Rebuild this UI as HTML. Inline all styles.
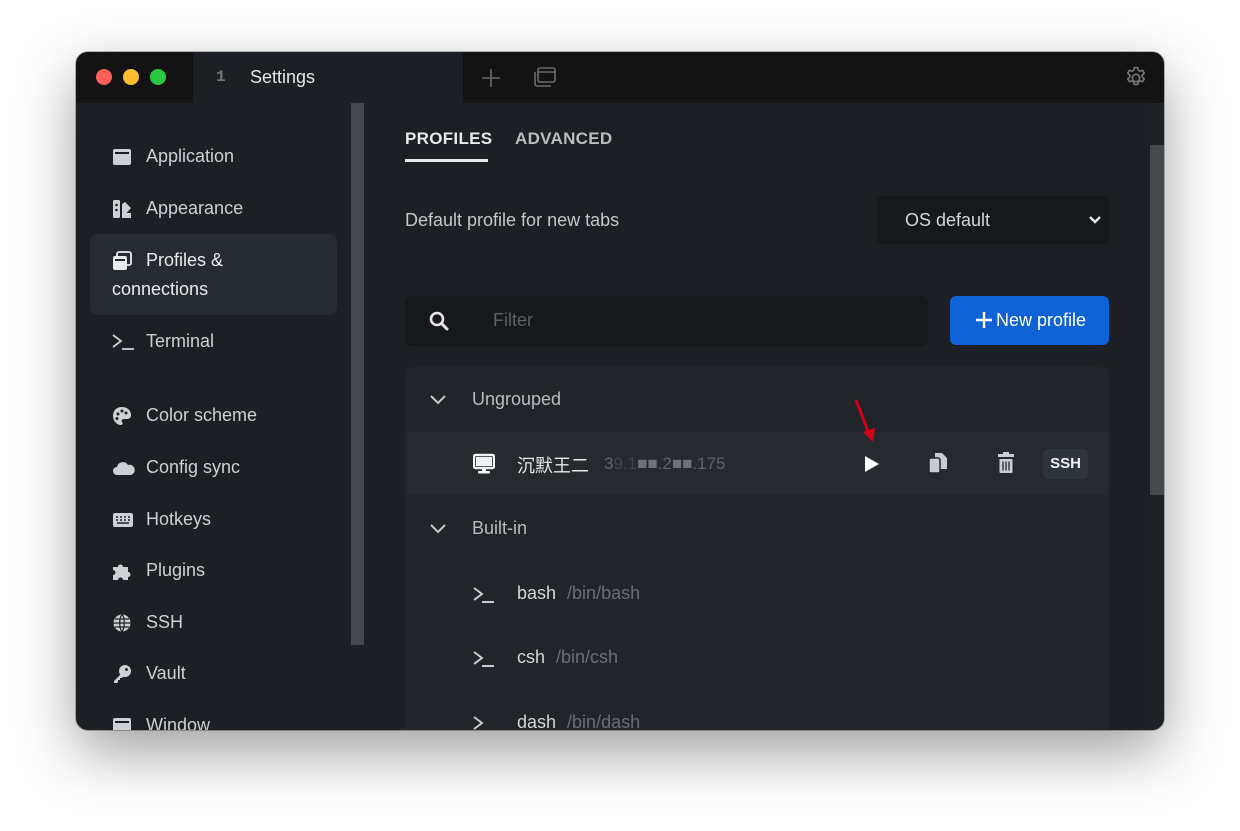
<!DOCTYPE html>
<html><head><meta charset="utf-8">
<style>
*{margin:0;padding:0;box-sizing:border-box}
body{width:1240px;height:831px;background:#fff;font-family:"Source Sans Pro","Liberation Sans","Noto Sans CJK SC",sans-serif;position:relative;overflow:hidden}
.win{position:absolute;left:76px;top:52px;width:1088px;height:678px;border-radius:12px;background:#1c1f23;overflow:hidden;box-shadow:0 22px 60px rgba(0,0,0,.38),0 0 0 1px rgba(0,0,0,.25)}
.abs{position:absolute}
.tb{left:0;top:0;width:1088px;height:51px;background:#131313}
.tab{left:117px;top:0;width:270px;height:51px;background:#1c1f23}
.dot{width:16px;height:16px;border-radius:50%;top:17px}
.t{color:#d4d6d9;font-size:18px;white-space:nowrap}
.side .it{position:absolute;left:36px;color:#cdd0d4;font-size:18px;display:flex;align-items:center}
.side .it svg{margin-right:14px}
.muted{color:#6b6f75}
</style></head><body>
<div class="win">
  <div class="abs tb"></div>
  <div class="abs tab"></div>
  <div class="abs dot" style="left:20px;background:#fe5f57"></div>
  <div class="abs dot" style="left:47px;background:#febc2e"></div>
  <div class="abs dot" style="left:74px;background:#28c840"></div>
  <div class="abs" style="left:140px;top:16px;color:#777;font-size:16px;font-weight:bold;font-family:'Liberation Mono',monospace">1</div>
  <div class="abs t" style="left:174px;top:15px;color:#e6e7e9">Settings</div>
  <svg class="abs" style="left:404px;top:15px" width="22" height="22"><path d="M11 2V20M2 11H20" stroke="#6a6a6a" stroke-width="1.6"/></svg>
  <svg class="abs" style="left:457px;top:14px" width="24" height="22"><rect x="5" y="2" width="17" height="14" rx="2" fill="none" stroke="#6a6a6a" stroke-width="1.6"/><path d="M5 6H22" stroke="#6a6a6a" stroke-width="1.6"/><path d="M2 6V18a2 2 0 0 0 2 2H18" fill="none" stroke="#6a6a6a" stroke-width="1.6"/></svg>
  <svg class="abs" style="left:1048px;top:14px" width="24" height="24" viewBox="0 0 24 24"><path d="M12 8.3a3.7 3.7 0 1 0 0 7.4a3.7 3.7 0 1 0 0-7.4z" fill="none" stroke="#777" stroke-width="1.6"/><path d="M10.3 1.5h3.4l.5 2.7 1.8 1 2.6-.9 1.7 2.9-2.1 1.8v2l2.1 1.8-1.7 2.9-2.6-.9-1.8 1-.5 2.7h-3.4l-.5-2.7-1.8-1-2.6.9-1.7-2.9 2.1-1.8v-2L3.7 7.2l1.7-2.9 2.6.9 1.8-1z" fill="none" stroke="#777" stroke-width="1.6" stroke-linejoin="round"/></svg>

  <div class="side">
    <div class="abs" style="left:14px;top:182px;width:247px;height:81px;background:#262b31;border-radius:8px"></div>
    <div class="it" style="top:94px"><svg width="20" height="18"><rect x="1" y="1" width="18" height="16" rx="2" fill="#cdd0d4"/><rect x="3" y="4" width="14" height="2" fill="#1c1f23"/></svg>Application</div>
    <div class="it" style="top:146px"><svg width="20" height="20"><rect x="1" y="1" width="7" height="18" rx="1.5" fill="#cdd0d4"/><circle cx="4.5" cy="6" r="1.3" fill="#1c1f23"/><circle cx="4.5" cy="11" r="1.3" fill="#1c1f23"/><path d="M10 5l3-2 6 6-9 10z" fill="#cdd0d4"/><rect x="10" y="14" width="9" height="5" fill="#cdd0d4"/></svg>Appearance</div>
    <div class="it" style="top:198px;color:#e9ebed"><svg width="20" height="20"><rect x="5" y="1" width="14" height="13" rx="2" fill="none" stroke="#e9ebed" stroke-width="1.8"/><rect x="1" y="5" width="14" height="14" rx="2" fill="#e9ebed"/><rect x="3" y="8" width="10" height="2" fill="#262b31"/></svg>Profiles &amp;</div>
    <div class="abs" style="left:36px;top:227px;color:#e9ebed;font-size:18px">connections</div>
    <div class="it" style="top:279px"><svg width="22" height="18" style="margin-right:12px"><path d="M1 2l8 6-8 6" fill="none" stroke="#cdd0d4" stroke-width="1.8"/><path d="M10 16H22" stroke="#cdd0d4" stroke-width="1.8"/></svg>Terminal</div>
    <div class="it" style="top:353px"><svg width="20" height="20"><path d="M10 1C4 1 1 5 1 10s4 9 8 9c2 0 2-2 1-3s0-3 2-3h3c3 0 4-2 4-4 0-5-4-8-9-8z" fill="#cdd0d4"/><circle cx="6" cy="8" r="1.5" fill="#1c1f23"/><circle cx="10" cy="5" r="1.5" fill="#1c1f23"/><circle cx="14" cy="7" r="1.5" fill="#1c1f23"/><circle cx="5" cy="12.5" r="1.5" fill="#1c1f23"/></svg>Color scheme</div>
    <div class="it" style="top:405px"><svg width="24" height="18" style="margin-right:10px"><path d="M5 16a4 4 0 0 1 0-8 6 6 0 0 1 11-2 5 5 0 0 1 3 10z" fill="#cdd0d4"/></svg>Config sync</div>
    <div class="it" style="top:457px"><svg width="22" height="16" style="margin-right:12px"><rect x="1" y="1" width="20" height="14" rx="2" fill="#cdd0d4"/><path d="M4 5h2M8 5h2M12 5h2M16 5h2M4 8h2M8 8h2M12 8h2M16 8h2M5 11h12" stroke="#1c1f23" stroke-width="1.4"/></svg>Hotkeys</div>
    <div class="it" style="top:508px"><svg width="20" height="20"><path d="M1 6h5a2.5 2.5 0 1 1 5 0h5v5a2.5 2.5 0 1 1 0 5v3H11a2.5 2.5 0 1 0-5 0H1v-5a2.5 2.5 0 1 0 0-5z" fill="#cdd0d4"/></svg>Plugins</div>
    <div class="it" style="top:560px"><svg width="20" height="20"><circle cx="10" cy="10" r="8.5" fill="#cdd0d4"/><path d="M10 1.5c-3 3-3 14 0 17M10 1.5c3 3 3 14 0 17M1.5 10H18.5M3 6h14M3 14h14" fill="none" stroke="#1c1f23" stroke-width="1.2"/></svg>SSH</div>
    <div class="it" style="top:611px"><svg width="20" height="20"><circle cx="13" cy="7" r="6" fill="#cdd0d4"/><path d="M9 10L2 17v2h3l1-1v-2h2v-2h2l2-2z" fill="#cdd0d4"/><circle cx="14.5" cy="5.5" r="1.5" fill="#1c1f23"/></svg>Vault</div>
    <div class="it" style="top:663px"><svg width="20" height="18"><rect x="1" y="1" width="18" height="16" rx="2" fill="#cdd0d4"/><rect x="3" y="4" width="14" height="2" fill="#1c1f23"/></svg>Window</div>
  </div>
  <div class="abs" style="left:275px;top:51px;width:13px;height:542px;background:#45484c"></div>
  <div class="abs" style="left:1074px;top:51px;width:14px;height:627px;background:#1e2125"></div>
  <div class="abs" style="left:1074px;top:93px;width:14px;height:350px;background:#45484c"></div>

  <div class="abs" style="left:329px;top:77px;color:#e8e9eb;font-size:17px;font-weight:bold;letter-spacing:.3px">PROFILES</div>
  <div class="abs" style="left:329px;top:107px;width:83px;height:3px;background:#e8e9eb"></div>
  <div class="abs" style="left:439px;top:77px;color:#b9bcc0;font-size:17px;font-weight:bold;letter-spacing:.3px">ADVANCED</div>
  <div class="abs t" style="left:329px;top:158px;color:#c4c7cb;font-size:18px">Default profile for new tabs</div>
  <div class="abs" style="left:801px;top:144px;width:232px;height:48px;background:#16181b;border-radius:6px"></div>
  <div class="abs t" style="left:829px;top:158px">OS default</div>
  <svg class="abs" style="left:1012px;top:162px" width="14" height="12"><path d="M2 3l5 5 5-5" fill="none" stroke="#e6e7e9" stroke-width="2.4"/></svg>

  <div class="abs" style="left:329px;top:244px;width:523px;height:50px;background:#16181b;border-radius:7px"></div>
  <svg class="abs" style="left:353px;top:259px" width="20" height="20"><circle cx="8" cy="8" r="6" fill="none" stroke="#e6e7e9" stroke-width="2.6"/><path d="M12.5 12.5L18 18" stroke="#e6e7e9" stroke-width="3" stroke-linecap="round"/></svg>
  <div class="abs t" style="left:417px;top:258px;color:#5d6166">Filter</div>
  <div class="abs" style="left:874px;top:244px;width:159px;height:49px;background:#0e62d5;border-radius:6px"></div>
  <svg class="abs" style="left:899px;top:259px" width="18" height="18"><path d="M9 1V17M1 9H17" stroke="#fff" stroke-width="2.4"/></svg>
  <div class="abs t" style="left:920px;top:258px;color:#fff">New profile</div>

  <div class="abs" style="left:329px;top:315px;width:704px;height:363px;background:#212428;border-radius:7px 7px 0 0"></div>
  <div class="abs" style="left:329px;top:380px;width:704px;height:63px;background:#26292e"></div>
  <svg class="abs" style="left:353px;top:341px" width="18" height="14"><path d="M2 3l7 7 7-7" fill="none" stroke="#c4c7cb" stroke-width="2"/></svg>
  <div class="abs t" style="left:396px;top:337px;color:#b9bcc0">Ungrouped</div>
  <svg class="abs" style="left:397px;top:401px" width="22" height="22"><rect x="1" y="2" width="20" height="13" rx="1.5" fill="none" stroke="#f0f1f2" stroke-width="2.4"/><rect x="3" y="4" width="16" height="9" fill="#f0f1f2"/><rect x="9" y="15" width="4" height="3" fill="#f0f1f2"/><rect x="5" y="18" width="12" height="2.5" rx="1" fill="#f0f1f2"/></svg>
  <div class="abs t" style="left:441px;top:400px;color:#e6e7e9">沉默王二</div>
  <div class="abs t" style="left:528px;top:402px;color:#5f6368;font-size:17px">3<span style="opacity:.5">9.1</span><span style="color:#6f7378">■■</span>.2<span style="color:#6f7378">■■</span>.175</div>
  <svg class="abs" style="left:787px;top:402px" width="18" height="20"><path d="M2 2L16 10 2 18z" fill="#fff"/></svg>
  <svg class="abs" style="left:777px;top:346px" width="26" height="48"><path d="M3 2L16 36" stroke="#d0021b" stroke-width="3"/><path d="M10 34L22 30 20 44z" fill="#d0021b"/></svg>
  <svg class="abs" style="left:852px;top:400px" width="20" height="22"><path d="M7 1h7l5 5v11H7z" fill="#c9ccd0"/><rect x="1" y="6" width="11" height="15" rx="2" fill="#c9ccd0" stroke="#26292e" stroke-width="1.5"/></svg>
  <svg class="abs" style="left:921px;top:400px" width="18" height="22"><rect x="1" y="2" width="16" height="3" fill="#c9ccd0"/><rect x="6" y="0" width="6" height="3" fill="#c9ccd0"/><path d="M2.5 7h13v13a1 1 0 0 1-1 1h-11a1 1 0 0 1-1-1z" fill="#c9ccd0"/><path d="M6 9.5v9M9 9.5v9M12 9.5v9" stroke="#26292e" stroke-width="1.3"/></svg>
  <div class="abs" style="left:967px;top:397px;width:45px;height:30px;background:#2e343c;border-radius:6px;color:#f0f1f2;font-size:15px;font-weight:bold;text-align:center;line-height:30px">SSH</div>

  <svg class="abs" style="left:353px;top:470px" width="18" height="14"><path d="M2 3l7 7 7-7" fill="none" stroke="#c4c7cb" stroke-width="2"/></svg>
  <div class="abs t" style="left:396px;top:466px;color:#b9bcc0">Built-in</div>

  <svg class="abs" style="left:397px;top:533px" width="24" height="20"><path d="M1 3l8 6-8 6" fill="none" stroke="#c9ccd0" stroke-width="2"/><path d="M9 17H21" stroke="#c9ccd0" stroke-width="2"/></svg>
  <div class="abs t" style="left:441px;top:531px">bash <span class="muted" style="margin-left:6px">/bin/bash</span></div>
  <svg class="abs" style="left:397px;top:597px" width="24" height="20"><path d="M1 3l8 6-8 6" fill="none" stroke="#c9ccd0" stroke-width="2"/><path d="M9 17H21" stroke="#c9ccd0" stroke-width="2"/></svg>
  <div class="abs t" style="left:441px;top:595px">csh <span class="muted" style="margin-left:6px">/bin/csh</span></div>
  <svg class="abs" style="left:397px;top:662px" width="24" height="20"><path d="M1 3l8 6-8 6" fill="none" stroke="#c9ccd0" stroke-width="2"/><path d="M9 17H21" stroke="#c9ccd0" stroke-width="2"/></svg>
  <div class="abs t" style="left:441px;top:660px">dash <span class="muted" style="margin-left:6px">/bin/dash</span></div>
</div>
</body></html>
